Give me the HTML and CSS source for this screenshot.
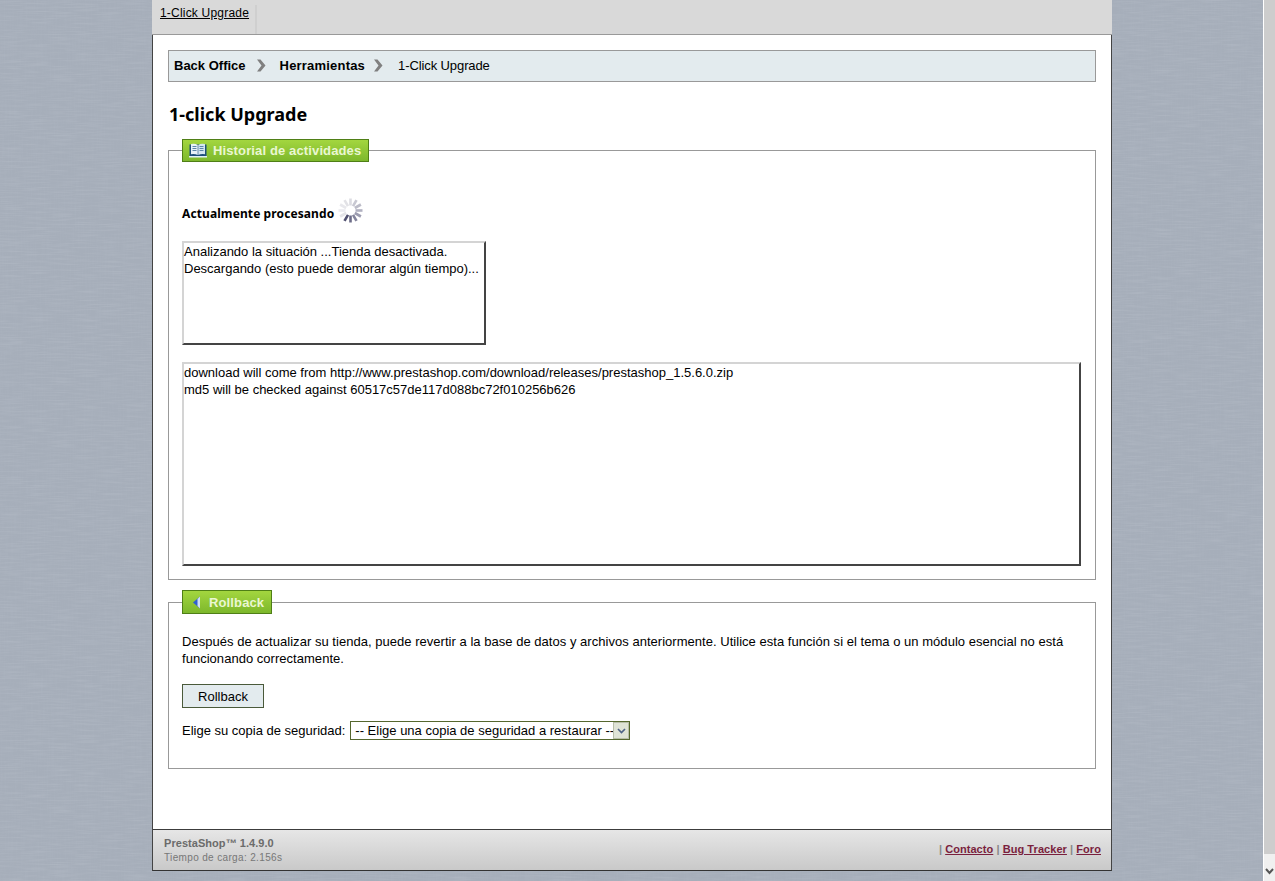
FILE: index.html
```html
<!DOCTYPE html>
<html lang="es">
<head>
<meta charset="utf-8">
<title>1-click Upgrade</title>
<link rel="stylesheet" href="styles.css">
</head>
<body>
<div class="viewport">
  <svg class="linen" width="1275" height="881" aria-hidden="true">
    <filter id="warp" x="0" y="0" width="100%" height="100%">
      <feTurbulence type="fractalNoise" baseFrequency="0.7 0.03" numOctaves="2" seed="4"/>
      <feColorMatrix type="matrix" values="0 0 0 0 0.45  0 0 0 0 0.5  0 0 0 0 0.58  1.1 0 0 0 -0.42"/>
    </filter>
    <filter id="weft" x="0" y="0" width="100%" height="100%">
      <feTurbulence type="fractalNoise" baseFrequency="0.04 0.7" numOctaves="2" seed="9"/>
      <feColorMatrix type="matrix" values="0 0 0 0 0.85  0 0 0 0 0.88  0 0 0 0 0.92  0.9 0 0 0 -0.38"/>
    </filter>
    <rect width="1275" height="881" filter="url(#warp)"/>
    <rect width="1275" height="881" filter="url(#weft)"/>
  </svg>
  <div class="page">
    <div class="topbar">
      <div class="tab"><a href="#">1-Click Upgrade</a></div>
    </div>
    <main class="content">
      <nav class="crumbs">
        <b>Back Office</b>
        <svg class="chev" width="10" height="13" viewBox="0 0 10 13"><path d="M1 0.5 L4.5 0.5 L9.5 6.5 L4.5 12.5 L1 12.5 L5.5 6.5 Z" fill="#808080"/></svg>
        <b class="crumb-mid">Herramientas</b>
        <svg class="chev chev-last" width="10" height="13" viewBox="0 0 10 13"><path d="M1 0.5 L4.5 0.5 L9.5 6.5 L4.5 12.5 L1 12.5 L5.5 6.5 Z" fill="#808080"/></svg>
        <span class="crumb-last">1-Click Upgrade</span>
      </nav>
      <h1 class="title">1-click Upgrade</h1>

      <fieldset class="panel panel-log">
        <legend class="badge">
          <svg class="book" width="18" height="15" viewBox="0 0 18 15">
            <path d="M0.5 1.5 H17.5 V13 H0.5 Z" fill="#1d4f7a"/>
            <path d="M2 1 Q6 0 8.7 2 V12 Q6 10.6 2 11.2 Z" fill="#e8f2f8"/>
            <path d="M16 1 Q12 0 9.3 2 V12 Q12 10.6 16 11.2 Z" fill="#d4e6f1"/>
            <path d="M3.5 3.5 H7.5 M3.5 5.5 H7.5 M3.5 7.5 H7.5 M10.5 3.5 H14.5 M10.5 5.5 H14.5 M10.5 7.5 H14.5" stroke="#5b86a8" stroke-width="1"/>
            <path d="M0 13 H18 V14.5 H0 Z" fill="#dff0f6"/>
          </svg>
          Historial de actividades
        </legend>
        <div class="status">
          <span>Actualmente procesando</span>
          <svg class="spinner" width="25" height="25" viewBox="-12.5 -12.5 25 25" stroke-width="2.6" stroke-linecap="butt">
            <line x1="0" y1="-5" x2="0" y2="-12" stroke="#dcdce2" transform="rotate(0)"/>
            <line x1="0" y1="-5" x2="0" y2="-12" stroke="#c8c8d2" transform="rotate(30)"/>
            <line x1="0" y1="-5" x2="0" y2="-12" stroke="#bcbcc8" transform="rotate(60)"/>
            <line x1="0" y1="-5" x2="0" y2="-12" stroke="#b0b0c0" transform="rotate(90)"/>
            <line x1="0" y1="-5" x2="0" y2="-12" stroke="#9c9cb0" transform="rotate(120)"/>
            <line x1="0" y1="-5" x2="0" y2="-12" stroke="#84849c" transform="rotate(150)"/>
            <line x1="0" y1="-5" x2="0" y2="-12" stroke="#6c6c88" transform="rotate(180)"/>
            <line x1="0" y1="-5" x2="0" y2="-12" stroke="#505070" transform="rotate(210)"/>
            <line x1="0" y1="-5" x2="0" y2="-12" stroke="#e4e4e8" transform="rotate(240)"/>
            <line x1="0" y1="-5" x2="0" y2="-12" stroke="#ececf0" transform="rotate(270)"/>
            <line x1="0" y1="-5" x2="0" y2="-12" stroke="#e8e8ec" transform="rotate(300)"/>
            <line x1="0" y1="-5" x2="0" y2="-12" stroke="#e2e2e6" transform="rotate(330)"/>
          </svg>
        </div>
        <div class="logbox logbox-small">Analizando la situación ...Tienda desactivada.<br>Descargando (esto puede demorar algún tiempo)...</div>
        <div class="logbox logbox-large">download will come from http://www.prestashop.com/download/releases/prestashop_1.5.6.0.zip<br>md5 will be checked against 60517c57de117d088bc72f010256b626</div>
      </fieldset>

      <fieldset class="panel panel-rollback">
        <legend class="badge badge-rollback">
          <svg class="back" width="9" height="13" viewBox="0 0 9 13">
            <path d="M8 0.5 V12.5 L1 6.5 Z" fill="#2f5fd0"/>
            <path d="M8 0.5 V12.5 L5.5 10 V3 Z" fill="#cfe0f5"/>
          </svg>
          Rollback
        </legend>
        <p class="desc">Después de actualizar su tienda, puede revertir a la base de datos y archivos anteriormente. Utilice esta función si el tema o un módulo esencial no está funcionando correctamente.</p>
        <button class="btn" type="button">Rollback</button>
        <div class="choose">
          <label for="backup">Elige su copia de seguridad:</label>
          <span class="selectwrap">
            <select id="backup" class="select"><option>-- Elige una copia de seguridad a restaurar --</option></select>
            <span class="selectarrow"><svg width="9" height="6" viewBox="0 0 9 6"><path d="M1 1 L4.5 4.5 L8 1" fill="none" stroke="#4d6185" stroke-width="1.6"/></svg></span>
          </span>
        </div>
      </fieldset>
    </main>
    <footer class="foot">
      <div class="foot-left">
        <div class="foot-version">PrestaShop™ 1.4.9.0</div>
        <div class="foot-time">Tiempo de carga: 2.156s</div>
      </div>
      <div class="foot-links">| <a href="#">Contacto</a> | <a href="#">Bug Tracker</a> | <a href="#">Foro</a></div>
    </footer>
  </div>
  <div class="scrollbar">
    <div class="scroll-thumb"></div>
    <div class="scroll-btn"><svg width="9" height="7" viewBox="0 0 9 7"><path d="M1 1 L4.5 5 L8 1" fill="none" stroke="#555" stroke-width="2"/></svg></div>
  </div>
</div>
</body>
</html>
```

FILE: styles.css
```css
* { box-sizing: border-box; }
html, body { margin: 0; padding: 0; height: 100%; overflow: hidden; }
body { font-family: "Liberation Sans", Arial, sans-serif; font-size: 13px; color: #000; }

.viewport {
  position: relative;
  display: flex;
  height: 881px;
  background-color: #a6aeba;
}
.linen { position: absolute; left: 0; top: 0; opacity: .24; }

.page {
  position: relative;
  width: 960px;
  height: 871px;
  margin-left: 152px;
  margin-right: 151px;
  display: flex;
  flex-direction: column;
  background: #fff;
  border-left: 1px solid #444;
  border-right: 1px solid #444;
  border-bottom: 1px solid #333;
  flex: none;
}

.topbar {
  height: 35px;
  flex: none;
  background: #d9d9d9;
  border-bottom: 1px solid #999;
  padding-top: 5px;
  margin: 0 -1px;
  padding-left: 1px;
}
.tab {
  width: 104px;
  height: 29px;
  padding: 1px 0 0 7px;
  border-right: 2px solid #cfcfcf;
  font-size: 12px;
  letter-spacing: .2px;
  line-height: 15px;
}
.tab a { color: #000; }

.content { flex: 1; padding: 15px 15px 0; min-height: 0; }

.crumbs {
  height: 32px;
  display: flex;
  align-items: center;
  padding: 0 0 2px 5px;
  background: #e3ebee;
  border: 1px solid #999;
}
.chev { margin: 0 14px 0 10px; }
.chev-last { margin: 0 15px 0 8px; }
.crumb-mid { letter-spacing: .2px; }
.crumb-last { letter-spacing: -.1px; }

.title {
  margin: 21px 0 14px 1px;
  font-family: "Noto Sans", Tahoma, sans-serif;
  font-size: 18px;
  line-height: 22px;
  font-weight: bold;
}

.panel {
  margin: 0;
  padding: 0 13px;
  border: 1px solid #999;
  min-width: 0;
}
.panel-log { height: 441px; }
.panel-rollback { height: 179px; margin-top: 10px; }

.badge {
  height: 23px;
  padding: 0 7px 0 6px;
  display: flex;
  align-items: center;
  color: #eaf7d2;
  font-size: 13px;
  font-weight: bold;
  letter-spacing: .13px;
  background: linear-gradient(#a3d63f, #7db82c);
  border: 1px solid #4f7f16;
}
.badge-rollback { height: 24px; }
.book { margin-right: 6px; }
.back { margin: 0 8px 0 3px; }

.status {
  display: flex;
  align-items: flex-end;
  margin-top: 36px;
  height: 25px;
  font-family: "Noto Sans", Tahoma, sans-serif;
  font-size: 12px;
  letter-spacing: .1px;
  line-height: 18px;
  font-weight: bold;
}
.spinner { margin-left: 4px; }

.logbox {
  padding: 0;
  line-height: 17px;
  border: 2px solid;
  border-color: #d4d4d4 #444 #444 #d4d4d4;
  background: #fff;
}
.logbox-small { width: 304px; height: 104px; margin-top: 18px; }
.logbox-large { width: 899px; height: 204px; margin-top: 17px; }

.desc { margin: 19px 0 0; line-height: 17px; letter-spacing: .03px; }

.btn {
  display: block;
  width: 82px;
  height: 24px;
  margin-top: 17px;
  padding: 0;
  background: #e3ebee;
  border: 1px solid #4a5a3a;
  font-family: inherit;
  font-size: 13px;
  color: #000;
}

.choose { display: flex; align-items: center; margin-top: 13px; height: 19px; }
.selectwrap {
  display: flex;
  width: 280px;
  height: 19px;
  margin-left: 5px;
  border: 1px solid #55672e;
}
.select {
  appearance: none;
  flex: 1;
  min-width: 0;
  border: 0;
  padding: 0 0 0 4px;
  background: #fff;
  font-family: inherit;
  font-size: 13px;
  color: #000;
}
.selectarrow {
  width: 16px;
  flex: none;
  display: flex;
  align-items: center;
  justify-content: center;
  background: #dfe3d6;
  border: 1px solid #b8bea8;
}

.foot {
  flex: none;
  height: 41px;
  display: flex;
  justify-content: space-between;
  align-items: center;
  padding: 0 10px 0 11px;
  background: linear-gradient(#e6e6e6, #c9c9c9);
  border-top: 1px solid #3c3c3c;
  color: #777;
}
.foot-version { font-size: 11px; font-weight: bold; color: #6b6b6b; line-height: 14px; letter-spacing: .05px; margin-bottom: 1px; }
.foot-time { font-size: 10px; line-height: 13px; color: #777; letter-spacing: .35px; }
.foot-links { font-size: 11px; font-weight: bold; color: #888; letter-spacing: .06px; padding-bottom: 2px; }
.foot-links a { color: #7a1f3d; }

.scrollbar {
  position: relative;
  width: 12px;
  flex: none;
  border-left: 1px solid #fff;
  display: flex;
  flex-direction: column;
}
.scroll-thumb { flex: 1; background: #cdcdcd; }
.scroll-btn {
  height: 27px;
  background: #f0f0f0;
  display: flex;
  align-items: flex-end;
  justify-content: center;
  padding-bottom: 6px;
}
```
